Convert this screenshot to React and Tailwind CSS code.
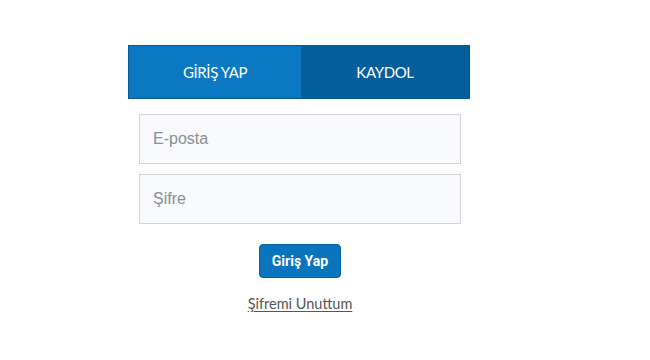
export default function App() {
  return (
    <div className="w-[650px] h-[360px] bg-white" style={{ fontFamily: 'Lato, "Open Sans", sans-serif' }}>
      <div className="pt-[45px] ml-[128px] w-[342px] flex flex-col">
        <div className="flex h-[54px] border border-[#06578f]">
          <button className="w-[172px] bg-[#0a78c3] text-white text-[15px] tracking-tight flex items-center justify-center">
            GİRİŞ YAP
          </button>
          <button className="flex-1 bg-[#045e9c] text-white text-[15px] tracking-tight flex items-center justify-center">
            KAYDOL
          </button>
        </div>
        <div className="pl-[11px] pr-[9px] pt-[15px] flex flex-col gap-[10px]">
          <input
            placeholder="E-posta"
            className="h-[50px] w-full border border-[#d3d3d3] bg-[#f8fafd] px-[13px] text-[16px] placeholder:text-[#8a8f94] outline-none"
            style={{ fontFamily: '"Liberation Sans", Arial, sans-serif' }}
          />
          <input
            placeholder="Şifre"
            type="password"
            className="h-[50px] w-full border border-[#d3d3d3] bg-[#f8fafd] px-[13px] text-[16px] placeholder:text-[#8a8f94] outline-none"
            style={{ fontFamily: '"Liberation Sans", Arial, sans-serif' }}
          />
        </div>
        <div className="flex flex-col items-center mt-[20px] pl-[2px]">
          <button
            className="h-[34px] w-[82px] rounded-[4px] bg-[#0a75bd] border border-[#06609c] text-white text-[14px] font-bold"
            style={{ fontFamily: 'Roboto, "Liberation Sans", sans-serif' }}
          >
            Giriş Yap
          </button>
          <a href="#" className="mt-[15px] text-[14.5px] text-[#555] underline underline-offset-2">
            Şifremi Unuttum
          </a>
        </div>
      </div>
    </div>
  )
}
